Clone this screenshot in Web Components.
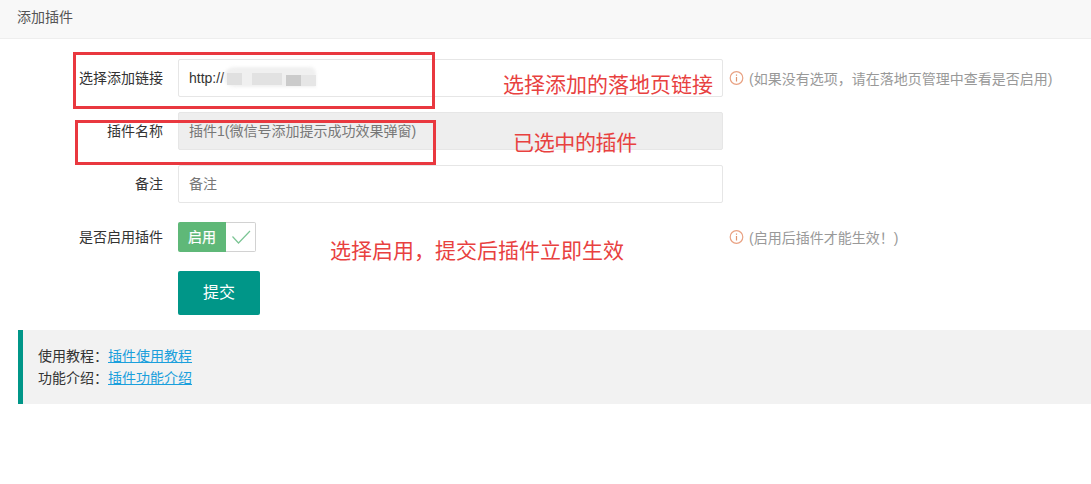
<!DOCTYPE html>
<html lang="zh">
<head>
<meta charset="utf-8">
<title>添加插件</title>
<style>
html, body { margin: 0; background: #fff; }
body { font: 14px "Liberation Sans", "Noto Sans CJK SC", sans-serif; color: #333; }
</style>
</head>
<body>
<plugin-page>
  <card-head>添加插件</card-head>
  <form-row label="选择添加链接" hint="(如果没有选项，请在落地页管理中查看是否启用)">
    <text-field>http://<blur-patch></blur-patch></text-field>
  </form-row>
  <form-row label="插件名称">
    <text-field disabled>插件1(微信号添加提示成功效果弹窗)</text-field>
  </form-row>
  <form-row label="备注">
    <text-field placeholder>备注</text-field>
  </form-row>
  <form-row label="是否启用插件" hint="(启用后插件才能生效！)">
    <check-toggle>启用</check-toggle>
  </form-row>
  <form-row>
    <submit-button>提交</submit-button>
  </form-row>
  <tip-quote>
    <div>使用教程：<a href="#">插件使用教程</a></div>
    <div>功能介绍：<a href="#">插件功能介绍</a></div>
  </tip-quote>

  <red-box style="left:73px;top:52px;width:362px;height:57px"></red-box>
  <red-box style="left:75px;top:120px;width:361px;height:45px"></red-box>
  <red-note style="left:503px;top:70px">选择添加的落地页链接</red-note>
  <red-note style="left:513px;top:128px;letter-spacing:-.35px">已选中的插件</red-note>
  <red-note style="left:330px;top:236px">选择启用，提交后插件立即生效</red-note>
</plugin-page>

<script>
const FONT = '"Liberation Sans", "Noto Sans CJK SC", sans-serif';

class PluginPage extends HTMLElement {
    constructor() {
        super();
        this.attachShadow({ mode: "open" }).innerHTML = `
        <style>
        :host { display: block; position: relative; min-height: 484px; font-family: ${FONT}; overflow: hidden; }
        </style>
        <slot></slot>`;
    }
}

class CardHead extends HTMLElement {
    constructor() {
        super();
        this.attachShadow({ mode: "open" }).innerHTML = `
        <style>
        :host {
            display: block; height: 38px; line-height: 35px; padding-left: 17px;
            background: #f8f8f8; border-bottom: 1px solid #eee;
            margin-bottom: 20px; color: #555; font-size: 14px;
        }
        </style>
        <slot></slot>`;
    }
}

class FormRow extends HTMLElement {
    constructor() {
        super();
        const label = this.getAttribute("label") || "";
        const hint = this.getAttribute("hint");
        this.attachShadow({ mode: "open" }).innerHTML = `
        <style>
        :host { display: flex; align-items: flex-start; margin-bottom: 15px; }
        .label { width: 163px; flex: none; text-align: right; line-height: 38px; color: #333; font-size: 14px; }
        .control { width: 545px; margin-left: 15px; flex: none; min-height: 38px; display: flex; align-items: center; }
        .hint { margin-left: 6px; display: flex; align-items: center; height: 38px; color: #999; font-size: 14px; white-space: nowrap; }
        svg { width: 15px; height: 15px; margin-right: 5px; flex: none; }
        </style>
        <div class="label">${label}</div>
        <div class="control"><slot></slot></div>
        ${hint ? `<div class="hint">
            <svg viewBox="0 0 15 15" fill="none">
                <circle cx="7.5" cy="7" r="6.3" stroke="#e9a283" stroke-width="1.2"/>
                <path d="M7.5 3.4v1.4M7.5 6v4.6" stroke="#e0946f" stroke-width="1.2"/>
            </svg>${hint}</div>` : ""}`;
    }
}

class TextField extends HTMLElement {
    constructor() {
        super();
        this.attachShadow({ mode: "open" }).innerHTML = `
        <style>
        :host {
            display: block; position: relative; box-sizing: border-box; width: 100%; height: 38px;
            line-height: 36px; padding-left: 10px; border: 1px solid #e6e6e6; border-radius: 2px;
            background: #fff; color: #333; font-size: 14px; white-space: nowrap;
        }
        :host([disabled]) { background: #eee; color: #777; }
        :host([placeholder]) { color: #777; }
        </style>
        <slot></slot>`;
    }
}

// the url is smudged out in the screenshot
class BlurPatch extends HTMLElement {
    constructor() {
        super();
        this.attachShadow({ mode: "open" }).innerHTML = `
        <style>
        :host { position: absolute; left: 45px; top: 6px; width: 92px; height: 22px; display: block; }
        div { position: absolute; }
        .base { left: 0; top: 1px; width: 92px; height: 20px; background: #f0f0f0; border-radius: 10px 6px 0 10px; filter: blur(1.5px); }
        .a { left: 3px; top: 7px; width: 15px; height: 12px; background: #e0e0e0; filter: blur(.5px); }
        .b { left: 28px; top: 7px; width: 30px; height: 12px; background: #e2e2e2; filter: blur(.5px); }
        .c { left: 62px; top: 9px; width: 15px; height: 11px; background: #cbcbcb; }
        .d { left: 77px; top: 9px; width: 15px; height: 11px; background: #e6e6e6; }
        </style>
        <div class="base"></div><div class="a"></div><div class="b"></div><div class="c"></div><div class="d"></div>`;
    }
}

class CheckToggle extends HTMLElement {
    constructor() {
        super();
        this.attachShadow({ mode: "open" }).innerHTML = `
        <style>
        :host { display: flex; width: 78px; height: 30px; box-sizing: border-box; }
        .text { width: 48px; background: #5fb878; color: #fff; font-size: 14px; line-height: 30px; text-align: center; border-radius: 2px 0 0 2px; -webkit-text-stroke: .25px #fff; }
        .tick { flex: 1; box-sizing: border-box; border: 1px solid #d2d2d2; border-left: 0; border-radius: 0 2px 2px 0; display: flex; align-items: center; justify-content: center; }
        svg { width: 20px; height: 16px; }
        </style>
        <div class="text"><slot></slot></div>
        <div class="tick"><svg viewBox="0 0 20 16" fill="none"><path d="M1.5 7.5l6 6.5L19 2" stroke="#7cc595" stroke-width="1.2"/></svg></div>`;
    }
}

class SubmitButton extends HTMLElement {
    constructor() {
        super();
        this.attachShadow({ mode: "open" }).innerHTML = `
        <style>
        :host { display: block; width: 82px; height: 44px; line-height: 44px; text-align: center; background: #009688; color: #fff; font-size: 16px; border-radius: 2px; cursor: pointer; }
        </style>
        <slot></slot>`;
    }
}

class TipQuote extends HTMLElement {
    constructor() {
        super();
        this.attachShadow({ mode: "open" }).innerHTML = `
        <style>
        :host { display: block; margin-left: 18px; height: 74px; box-sizing: border-box; padding: 15px; line-height: 22px; background: #f2f2f2; border-left: 5px solid #009688; color: #333; font-size: 14px; }
        ::slotted(div) { white-space: nowrap; }
        </style>
        <slot></slot>`;
    }
    connectedCallback() {
        this.querySelectorAll("a").forEach(a => { a.style.color = "#1a9fdc"; });
    }
}

class RedBox extends HTMLElement {
    constructor() {
        super();
        this.attachShadow({ mode: "open" }).innerHTML = `
        <style>
        :host { position: absolute; display: block; box-sizing: border-box; border: 3px solid #e9383f; pointer-events: none; }
        </style>`;
    }
}

class RedNote extends HTMLElement {
    constructor() {
        super();
        this.attachShadow({ mode: "open" }).innerHTML = `
        <style>
        :host { position: absolute; display: block; color: #e8413f; font-size: 21px; line-height: 30px; white-space: nowrap; }
        </style>
        <slot></slot>`;
    }
}

customElements.define("plugin-page", PluginPage);
customElements.define("card-head", CardHead);
customElements.define("form-row", FormRow);
customElements.define("text-field", TextField);
customElements.define("blur-patch", BlurPatch);
customElements.define("check-toggle", CheckToggle);
customElements.define("submit-button", SubmitButton);
customElements.define("tip-quote", TipQuote);
customElements.define("red-box", RedBox);
customElements.define("red-note", RedNote);
</script>
</body>
</html>
